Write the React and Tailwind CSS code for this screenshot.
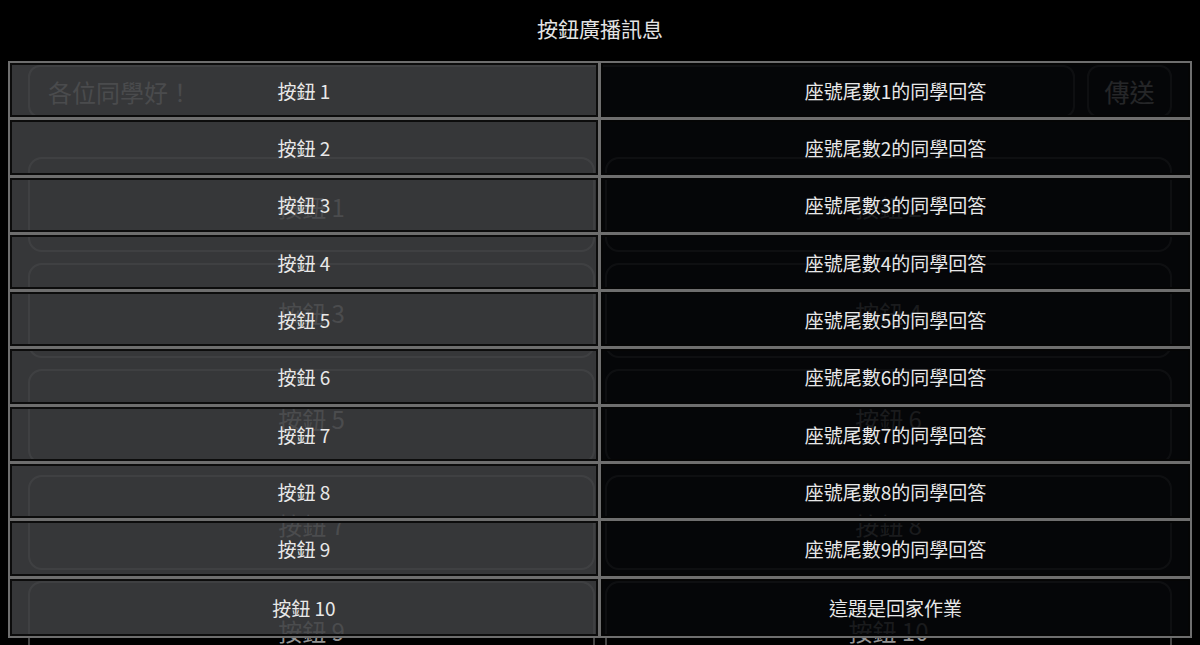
import React from "react";

const rows = [
  ["按鈕 1", "座號尾數1的同學回答"],
  ["按鈕 2", "座號尾數2的同學回答"],
  ["按鈕 3", "座號尾數3的同學回答"],
  ["按鈕 4", "座號尾數4的同學回答"],
  ["按鈕 5", "座號尾數5的同學回答"],
  ["按鈕 6", "座號尾數6的同學回答"],
  ["按鈕 7", "座號尾數7的同學回答"],
  ["按鈕 8", "座號尾數8的同學回答"],
  ["按鈕 9", "座號尾數9的同學回答"],
  ["按鈕 10", "這題是回家作業"],
];

const ghostButtons = ["按鈕 1", "按鈕 2", "按鈕 3", "按鈕 4", "按鈕 5", "按鈕 6", "按鈕 7", "按鈕 8", "按鈕 9", "按鈕 10"];

export default function App() {
  return (
    <div className="relative w-[1200px] h-[645px] overflow-hidden bg-black font-['Noto_Sans_CJK_TC','Noto_Sans',sans-serif]">
      {/* underlying app (seen through the overlay) */}
      <div className="px-[28px] pt-[65px]">
        <div className="flex gap-[12px] h-[53px]">
          <div className="flex-1 rounded-[12px] border-2 border-[#454545] flex items-center pl-[18px] text-[24px] text-[#8c8c8c]">
            各位同學好！
          </div>
          <div className="w-[85px] rounded-[12px] border-2 border-[#454545] flex items-center justify-center text-[25px] text-[#e0e0e0]">
            傳送
          </div>
        </div>
        <div className="mt-[39px] grid grid-cols-2 gap-x-[10px] gap-y-[11px]">
          {ghostButtons.map((b) => (
            <div
              key={b}
              className="h-[95px] rounded-[14px] border-2 border-[#454545] flex items-center justify-center pt-[4px] text-[24px] text-[#939393]"
            >
              {b}
            </div>
          ))}
        </div>
      </div>

      {/* overlay */}
      <div className="absolute inset-0 flex flex-col">
        <div className="h-[61px] flex items-center justify-center pb-[3px] text-[21px] text-[#e4e4e4]">
          按鈕廣播訊息
        </div>
        <div className="mx-[8px] h-[577px] grid grid-cols-[591px_1fr] grid-rows-10 border-2 border-[#6e6e6e]">
          {rows.map(([a, b], i) => (
            <React.Fragment key={a}>
              <div
                className={
                  i < rows.length - 1
                    ? "flex border-r-[3px] border-b-[3px] border-[#6e6e6e]"
                    : "flex border-r-[3px] border-[#6e6e6e]"
                }
              >
                <div className="flex-1 border-2 border-[#0c0c0c] bg-[rgba(63,64,66,0.86)] flex items-center justify-center pt-[2px] text-[19px] text-[#e8e8e8]">
                  {a}
                </div>
              </div>
              <div
                className={
                  i < rows.length - 1
                    ? "flex border-b-[3px] border-[#6e6e6e]"
                    : "flex"
                }
              >
                <div className="flex-1 border-2 border-[#050505] bg-[rgba(6,7,9,0.86)] flex items-center justify-center pt-[2px] text-[19px] text-[#e8e8e8]">
                  {b}
                </div>
              </div>
            </React.Fragment>
          ))}
        </div>
      </div>
    </div>
  );
}
